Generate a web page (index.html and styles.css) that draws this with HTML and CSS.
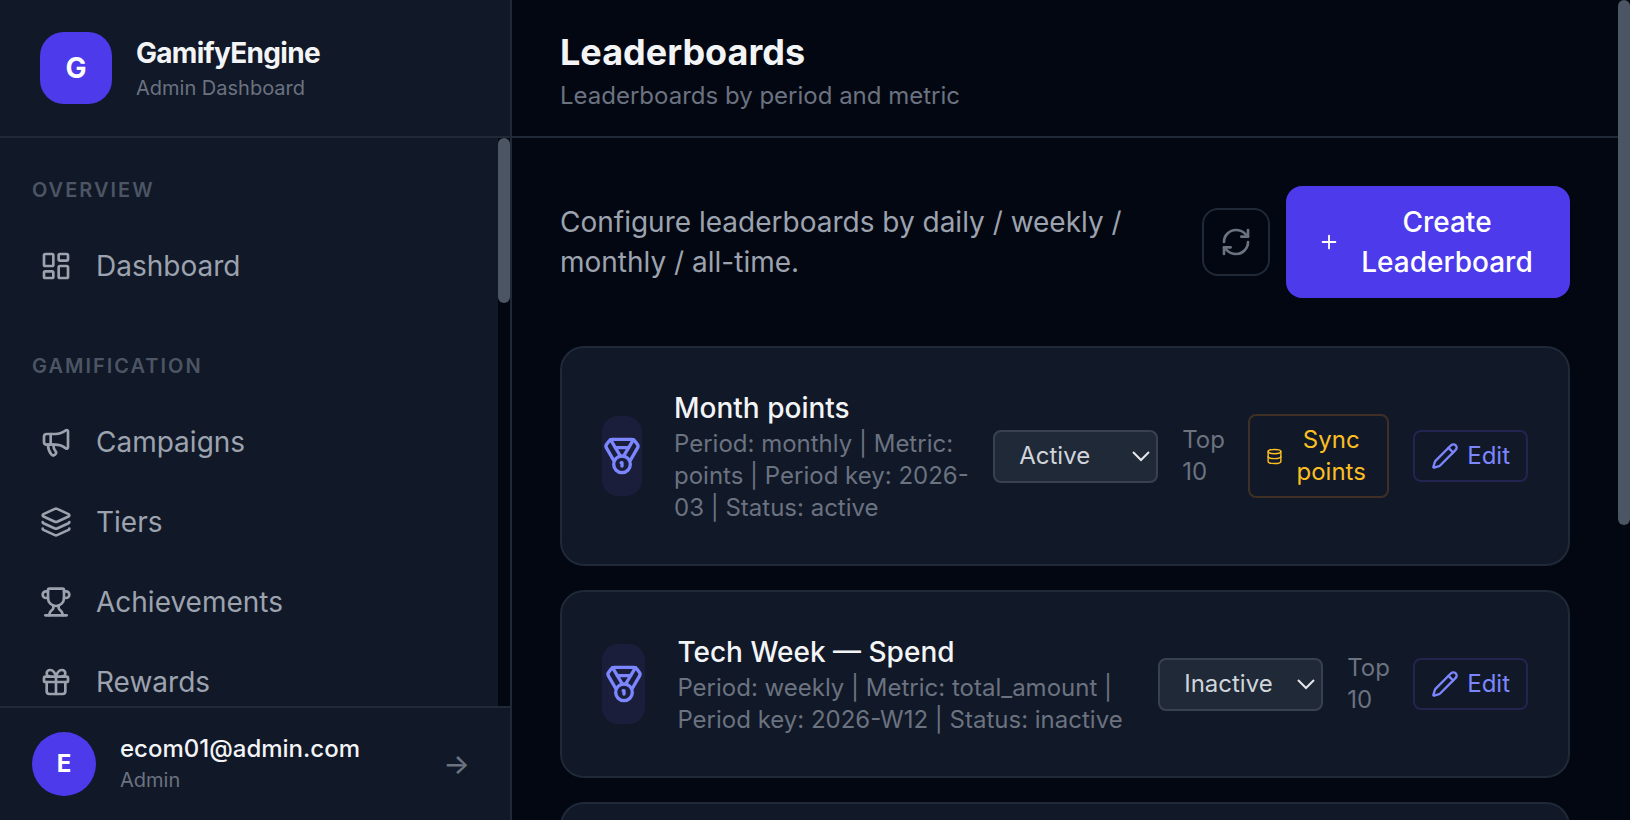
FILE: index.html
```
<!DOCTYPE html>
<html lang="en">
<head>
    <meta charset="UTF-8">
    <meta name="viewport" content="width=device-width, initial-scale=1.0">
    <title>GamifyEngine - Leaderboards</title>
    <link rel="stylesheet" href="styles.css">
</head>
<body>
    <aside class="sidebar">
        <div class="brand">
            <div class="brand-logo">G</div>
            <div>
                <div class="brand-name">GamifyEngine</div>
                <div class="brand-sub">Admin Dashboard</div>
            </div>
        </div>

        <div class="nav-wrap">
            <nav class="nav">
                <div class="nav-section">
                    <h2 class="nav-label">Overview</h2>
                    <a class="nav-item" href="#">
                        <svg class="icon" viewBox="0 0 24 24"><rect x="3" y="3" width="7" height="9" rx="1"/><rect x="14" y="3" width="7" height="5" rx="1"/><rect x="14" y="12" width="7" height="9" rx="1"/><rect x="3" y="16" width="7" height="5" rx="1"/></svg>
                        Dashboard
                    </a>
                </div>
                <div class="nav-section">
                    <h2 class="nav-label">Gamification</h2>
                    <a class="nav-item" href="#">
                        <svg class="icon" viewBox="0 0 24 24"><path d="M11 6a13 13 0 0 0 8.4-2.8A1 1 0 0 1 21 4v12a1 1 0 0 1-1.6.8A13 13 0 0 0 11 14H5a2 2 0 0 1-2-2V8a2 2 0 0 1 2-2z"/><path d="M6 14a12 12 0 0 0 2.4 7.2 2 2 0 0 0 3.2-2.4A8 8 0 0 1 10 14"/><path d="M8 6v8"/></svg>
                        Campaigns
                    </a>
                    <a class="nav-item" href="#">
                        <svg class="icon" viewBox="0 0 24 24"><path d="M12.83 2.18a2 2 0 0 0-1.66 0L2.6 6.08a1 1 0 0 0 0 1.83l8.58 3.91a2 2 0 0 0 1.66 0l8.58-3.9a1 1 0 0 0 0-1.83z"/><path d="M2 12a1 1 0 0 0 .58.91l8.6 3.91a2 2 0 0 0 1.65 0l8.58-3.9A1 1 0 0 0 22 12"/><path d="M2 17a1 1 0 0 0 .58.91l8.6 3.91a2 2 0 0 0 1.65 0l8.58-3.9A1 1 0 0 0 22 17"/></svg>
                        Tiers
                    </a>
                    <a class="nav-item" href="#">
                        <svg class="icon" viewBox="0 0 24 24"><path d="M10 14.66v1.626a2 2 0 0 1-.976 1.696A5 5 0 0 0 7 21.978"/><path d="M14 14.66v1.626a2 2 0 0 0 .976 1.696A5 5 0 0 1 17 21.978"/><path d="M18 9h1.5a1 1 0 0 0 0-5H18"/><path d="M4 22h16"/><path d="M6 9a6 6 0 0 0 12 0V3a1 1 0 0 0-1-1H7a1 1 0 0 0-1 1z"/><path d="M6 9H4.5a1 1 0 0 1 0-5H6"/></svg>
                        Achievements
                    </a>
                    <a class="nav-item" href="#">
                        <svg class="icon" viewBox="0 0 24 24"><rect x="3" y="8" width="18" height="4" rx="1"/><path d="M12 8v13"/><path d="M19 12v7a2 2 0 0 1-2 2H7a2 2 0 0 1-2-2v-7"/><path d="M7.5 8a2.5 2.5 0 0 1 0-5A4.8 8 0 0 1 12 8a4.8 8 0 0 1 4.5-5 2.5 2.5 0 0 1 0 5"/></svg>
                        Rewards
                    </a>
                </div>
            </nav>
            <div class="scrollbar"><div class="thumb thumb-nav"></div></div>
        </div>

        <div class="user">
            <div class="avatar">E</div>
            <div class="user-info">
                <div class="user-email">ecom01@admin.com</div>
                <div class="user-role">Admin</div>
            </div>
            <button class="logout" type="button" title="Logout">→</button>
        </div>
    </aside>

    <main class="main">
        <header class="page-header">
            <h1>Leaderboards</h1>
            <p>Leaderboards by period and metric</p>
        </header>

        <div class="content">
            <div class="toolbar">
                <p>Configure leaderboards by daily / weekly / monthly / all-time.</p>
                <button class="btn-refresh" type="button" title="Refresh">
                    <svg class="icon" viewBox="0 0 24 24"><path d="M3 12a9 9 0 0 1 9-9 9.75 9.75 0 0 1 6.74 2.74L21 8"/><path d="M21 3v5h-5"/><path d="M21 12a9 9 0 0 1-9 9 9.75 9.75 0 0 1-6.74-2.74L3 16"/><path d="M8 16H3v5"/></svg>
                </button>
                <button class="btn-create" type="button">
                    <svg class="icon icon-plus" viewBox="0 0 24 24"><path d="M5 12h14"/><path d="M12 5v14"/></svg>
                    <span>Create Leaderboard</span>
                </button>
            </div>

            <div class="board-list">
                <article class="card">
                    <div class="medal">
                        <svg class="icon icon-medal" viewBox="0 0 24 24"><path d="M7.21 15 2.66 7.14a2 2 0 0 1 .13-2.2L4.4 2.8A2 2 0 0 1 6 2h12a2 2 0 0 1 1.6.8l1.6 2.14a2 2 0 0 1 .14 2.2L16.79 15"/><path d="M11 12 5.12 2.2"/><path d="m13 12 5.88-9.8"/><path d="M8 7h8"/><circle cx="12" cy="17" r="5"/><path d="M12 18v-2h-.5"/></svg>
                    </div>
                    <div class="card-info">
                        <h3>Month points</h3>
                        <p>Period: monthly | Metric: points | Period key: 2026-03 | Status: active</p>
                    </div>
                    <div class="card-actions">
                        <select class="status" aria-label="Month points status">
                            <option selected>Active</option>
                            <option>Inactive</option>
                        </select>
                        <span class="top">Top 10</span>
                        <button class="btn-sync" type="button">
                            <svg class="icon icon-db" viewBox="0 0 24 24"><ellipse cx="12" cy="5" rx="9" ry="3"/><path d="M3 5V19A9 3 0 0 0 21 19V5"/><path d="M3 12A9 3 0 0 0 21 12"/></svg>
                            <span>Sync points</span>
                        </button>
                        <button class="btn-edit" type="button">
                            <svg class="icon icon-edit" viewBox="0 0 24 24"><path d="M21.174 6.812a1 1 0 0 0-3.986-3.987L3.842 16.174a2 2 0 0 0-.5.83l-1.321 4.352a.5.5 0 0 0 .623.622l4.353-1.32a2 2 0 0 0 .83-.497z"/><path d="m15 5 4 4"/></svg>
                            Edit
                        </button>
                    </div>
                </article>

                <article class="card">
                    <div class="medal">
                        <svg class="icon icon-medal" viewBox="0 0 24 24"><path d="M7.21 15 2.66 7.14a2 2 0 0 1 .13-2.2L4.4 2.8A2 2 0 0 1 6 2h12a2 2 0 0 1 1.6.8l1.6 2.14a2 2 0 0 1 .14 2.2L16.79 15"/><path d="M11 12 5.12 2.2"/><path d="m13 12 5.88-9.8"/><path d="M8 7h8"/><circle cx="12" cy="17" r="5"/><path d="M12 18v-2h-.5"/></svg>
                    </div>
                    <div class="card-info">
                        <h3>Tech Week — Spend</h3>
                        <p>Period: weekly | Metric: total_amount | Period key: 2026-W12 | Status: inactive</p>
                    </div>
                    <div class="card-actions">
                        <select class="status" aria-label="Tech Week status">
                            <option>Active</option>
                            <option selected>Inactive</option>
                        </select>
                        <span class="top">Top 10</span>
                        <button class="btn-edit" type="button">
                            <svg class="icon icon-edit" viewBox="0 0 24 24"><path d="M21.174 6.812a1 1 0 0 0-3.986-3.987L3.842 16.174a2 2 0 0 0-.5.83l-1.321 4.352a.5.5 0 0 0 .623.622l4.353-1.32a2 2 0 0 0 .83-.497z"/><path d="m15 5 4 4"/></svg>
                            Edit
                        </button>
                    </div>
                </article>

                <article class="card card-empty"></article>
            </div>
        </div>
    </main>
    <div class="scrollbar"><div class="thumb thumb-page"></div></div>
</body>
</html>
```
FILE: styles.css
```
* {
    box-sizing: border-box;
}
body {
    margin: 0;
    display: flex;
    height: 100vh;
    overflow: hidden;
    font-family: Inter, sans-serif;
    font-optical-sizing: none;
    font-size: 28px;
    line-height: 40px;
    background: #030712;
    color: #f3f4f6;
}
h1, h2, h3, p {
    margin: 0;
    font-weight: 400;
}
button, select {
    font: inherit;
    cursor: pointer;
}
.icon {
    width: 32px;
    height: 32px;
    flex: none;
    fill: none;
    stroke: currentColor;
    stroke-width: 2;
    stroke-linecap: round;
    stroke-linejoin: round;
}

/* Scrollbars */
.scrollbar {
    flex: none;
    width: 12px;
    background: #030712;
}
.thumb {
    border-radius: 6px;
    background: #4b5563;
}
.thumb-nav {
    height: 29%;
}
.thumb-page {
    height: 64%;
}

/* Sidebar */
.sidebar {
    flex: none;
    width: 512px;
    display: flex;
    flex-direction: column;
    background: #111827;
    border-right: 2px solid #1f2937;
}
.brand {
    display: flex;
    align-items: center;
    gap: 24px;
    padding: 32px 40px;
    border-bottom: 2px solid #1f2937;
}
.brand-logo {
    width: 72px;
    height: 72px;
    border-radius: 24px;
    background: #4c3aeb;
    color: #fff;
    font-weight: 700;
    line-height: 72px;
    text-align: center;
}
.brand-name {
    font-weight: 700;
    letter-spacing: -0.025em;
}
.brand-sub, .user-role {
    font-size: 20px;
    line-height: 30px;
    color: #6b7280;
}
.nav-wrap {
    flex: 1;
    min-height: 0;
    display: flex;
}
.nav {
    flex: 1;
    overflow-y: auto;
    scrollbar-width: none;
    padding: 32px 16px 0;
}
.nav-section {
    margin-bottom: 44px;
}
.nav-section:last-child {
    margin-bottom: 0;
}
.nav-label {
    padding: 0 16px;
    margin-bottom: 20px;
    font-size: 20px;
    font-weight: 600;
    letter-spacing: 0.1em;
    text-transform: uppercase;
    color: #4b5563;
}
.nav-item {
    display: flex;
    align-items: center;
    gap: 24px;
    padding: 16px 24px;
    margin-bottom: 8px;
    color: #9ca3af;
    text-decoration: none;
}
.nav-item:last-child {
    margin-bottom: 0;
}
.user {
    display: flex;
    align-items: center;
    gap: 24px;
    padding: 24px 32px;
    border-top: 2px solid #1f2937;
}
.avatar {
    width: 64px;
    height: 64px;
    border-radius: 50%;
    background: #4c3aeb;
    color: #fff;
    font-size: 24px;
    font-weight: 700;
    line-height: 64px;
    text-align: center;
}
.user-info {
    flex: 1;
}
.user-email {
    font-size: 24px;
    font-weight: 500;
    line-height: 32px;
}
.logout {
    padding: 8px;
    border: none;
    background: none;
    color: #6b7280;
    font-size: 28px;
    font-weight: 500;
    line-height: 32px;
}

/* Main */
.main {
    flex: 1;
    min-width: 0;
    overflow-y: auto;
    scrollbar-width: none;
}
.page-header {
    position: sticky;
    top: 0;
    padding: 24px 48px;
    background: #030712;
    border-bottom: 2px solid #1f2937;
}
.page-header h1 {
    font-size: 36px;
    font-weight: 700;
    line-height: 56px;
}
.page-header p {
    font-size: 24px;
    line-height: 32px;
    color: #6b7280;
}
.content {
    padding: 48px;
}
.toolbar {
    display: flex;
    align-items: center;
    gap: 16px;
    margin-bottom: 48px;
}
.toolbar p {
    flex: 1;
    color: #9ca3af;
}
.btn-refresh {
    display: flex;
    padding: 16px;
    border: 2px solid #1f2937;
    border-radius: 16px;
    background: none;
    color: #6b7280;
}
.btn-create {
    display: flex;
    align-items: center;
    gap: 16px;
    width: 284px;
    padding: 16px 32px;
    border: none;
    border-radius: 16px;
    background: #4c3aeb;
    color: #fff;
    font-weight: 500;
}
.btn-create span {
    flex: 1;
}
.icon-plus {
    width: 22px;
    height: 22px;
}
.board-list {
    display: flex;
    flex-direction: column;
    gap: 24px;
}
.card {
    display: flex;
    align-items: center;
    padding: 40px;
    background: #111827;
    border: 2px solid #1f2937;
    border-radius: 24px;
}
.card-empty {
    min-height: 188px;
}
.medal {
    flex: 0 1 84px;
    min-width: 40px;
    display: flex;
    align-items: center;
    justify-content: center;
    height: 80px;
    margin-right: 32px;
    border-radius: 16px;
    background: #1b1e3b;
    color: #7c86ff;
}
.icon-medal {
    width: 40px;
    height: 40px;
}
.card-info {
    flex: 1 1 auto;
    min-width: 0;
}
.card-info h3 {
    font-size: 28px;
    font-weight: 500;
}
.card-info p {
    font-size: 24px;
    line-height: 32px;
    color: #6b7280;
}
.card-actions {
    flex: none;
    display: flex;
    align-items: center;
    gap: 24px;
    margin-left: 23px;
    font-size: 24px;
    line-height: 32px;
}
.status {
    width: 165px;
    height: 53px;
    padding: 0 24px;
    border: 2px solid #374151;
    border-radius: 8px;
    appearance: none;
    background: #1f2937 url("data:image/svg+xml,%3Csvg xmlns='http://www.w3.org/2000/svg' viewBox='0 0 18 12' fill='none' stroke='%23e5e7eb' stroke-width='2'%3E%3Cpath d='M1 2l8 8 8-8'/%3E%3C/svg%3E") no-repeat right 6px center / 18px 12px;
    color: #d1d5db;
}
.top {
    width: 42px;
    color: #6b7280;
}
.btn-sync, .btn-edit {
    display: flex;
    align-items: center;
    gap: 8px;
    padding: 8px 16px;
    border: 2px solid #3f3026;
    border-radius: 8px;
    background: none;
    color: #fbbf24;
}
.btn-sync {
    width: 141px;
}
.btn-sync span {
    flex: 1;
}
.icon-db {
    width: 17px;
    height: 17px;
}
.btn-edit {
    border-color: #23244f;
    color: #7c86ff;
}
.icon-edit {
    width: 28px;
    height: 28px;
}
```
